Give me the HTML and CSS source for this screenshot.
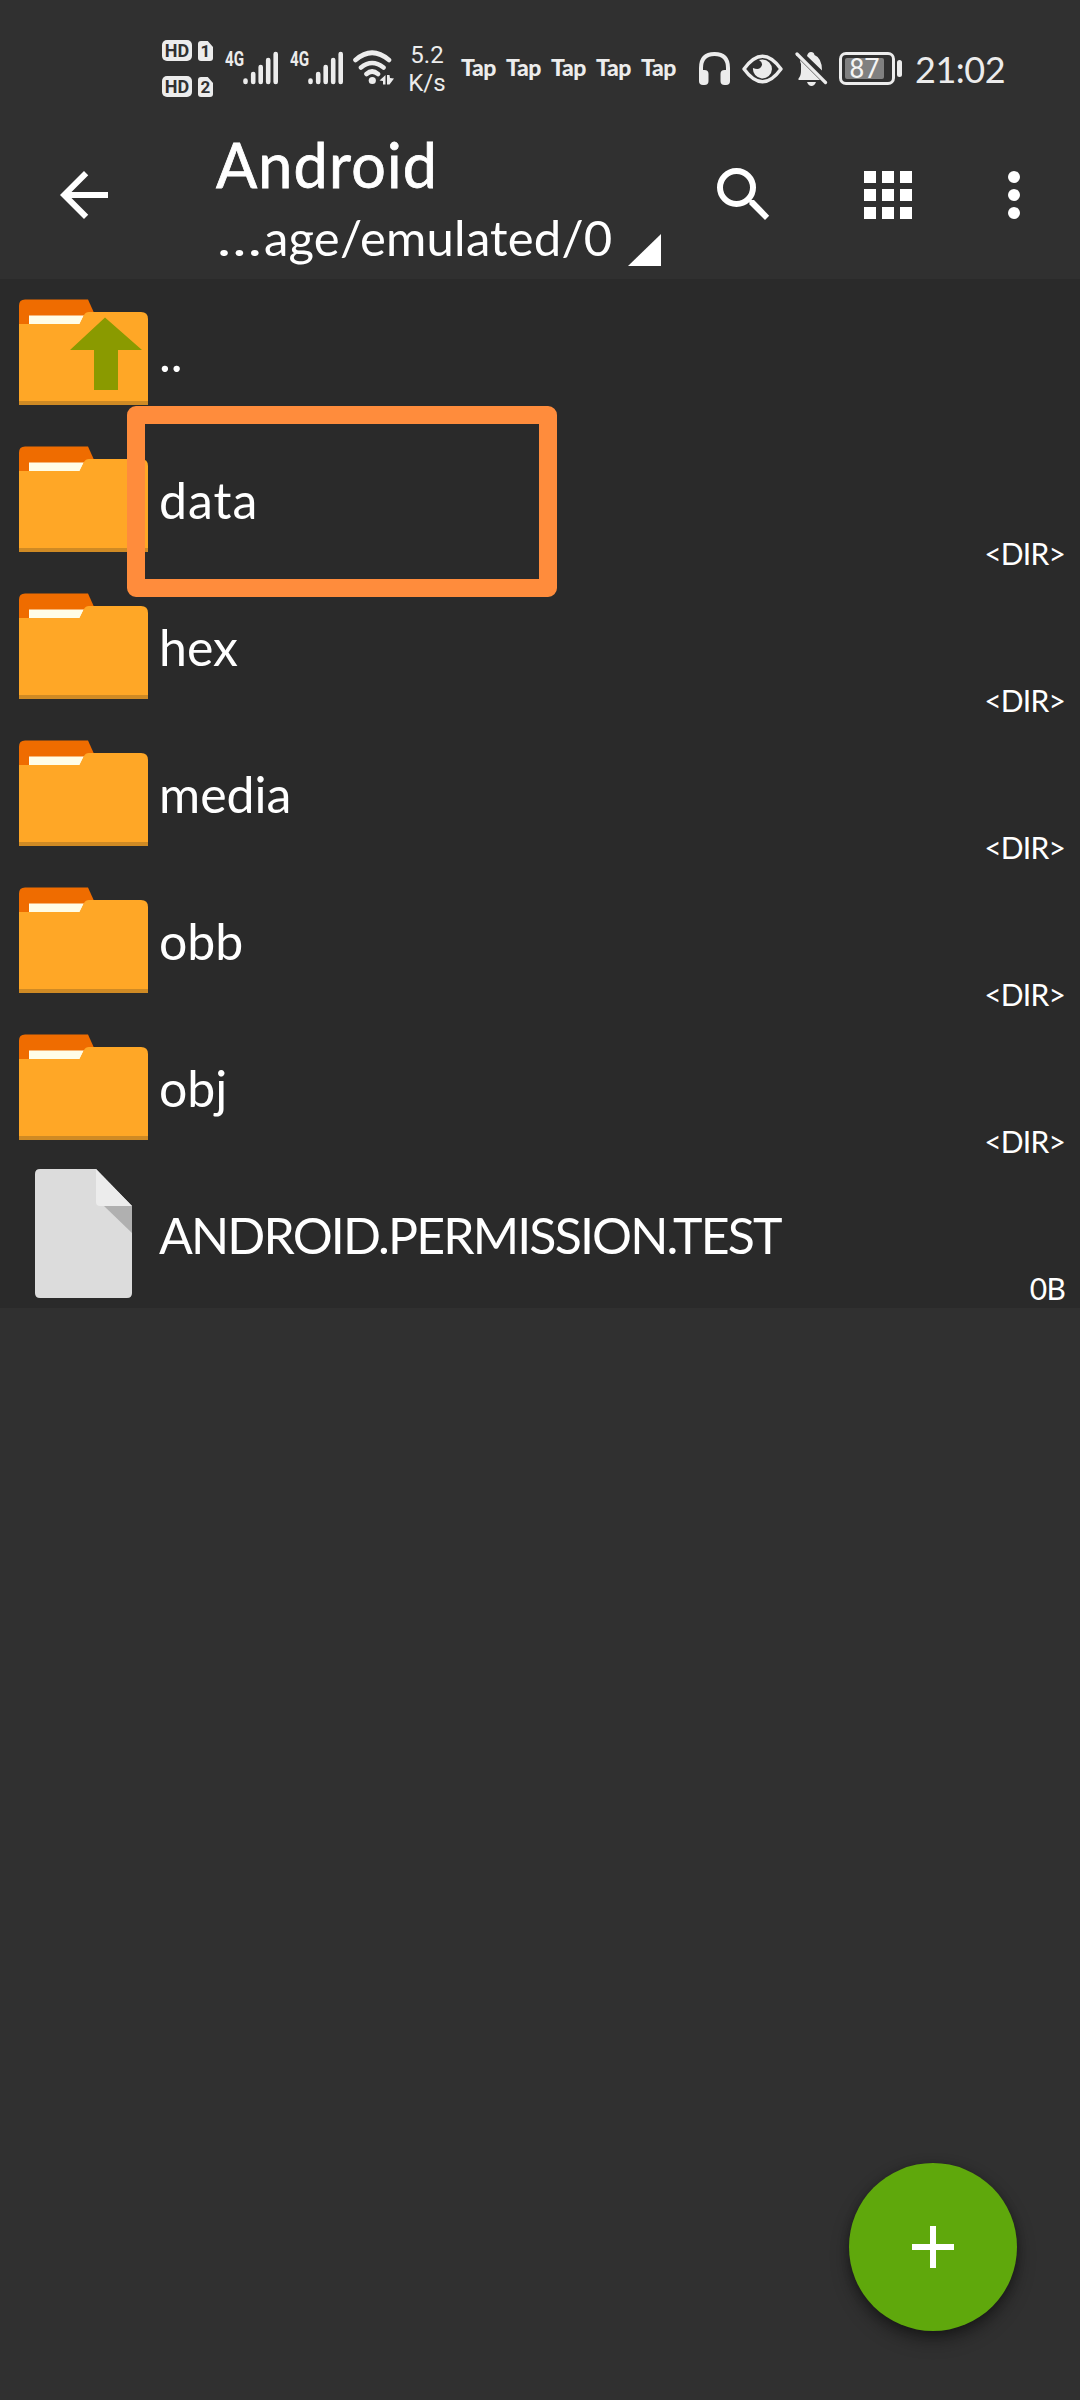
FILE: index.html
```html
<!DOCTYPE html>
<html lang="en">
<head>
<meta charset="utf-8">
<title>Android</title>
<link rel="stylesheet" href="styles.css">
</head>
<body>
<svg class="defs" width="0" height="0">
  <symbol id="folder" viewBox="0 0 129 129">
    <path fill="#ef6c00" d="M0 40V18.500Q0 12.500 6 12.500H69L76 28V40z"/>
    <path fill="#fffde7" d="M10 28.500H65L61 37H10z"/>
    <path fill="#ffa726" d="M0 37H60.500L65 28Q66.500 25 70 25H122Q129 25 129 32V118H0z"/>
    <path fill="#cf8a24" d="M0 114H129V118H0z"/>
  </symbol>
  <symbol id="signal" viewBox="0 0 36 34">
    <path fill="none" stroke="#ececec" stroke-width="4.600" stroke-linecap="round" d="M2.500 29.500V31M10.200 23V31M17.700 16V31M25.200 9V31M32.700 3V31"/>
  </symbol>
</svg>
<header class="status">
  <div class="sims">
    <div class="sim"><span class="hd">HD</span><span class="slot">1</span></div>
    <div class="sim"><span class="hd">HD</span><span class="slot">2</span></div>
  </div>
  <div class="net"><span>4G</span><svg width="36" height="34"><use href="#signal"/></svg></div>
  <div class="net second"><span>4G</span><svg width="36" height="34"><use href="#signal"/></svg></div>
  <svg class="wifi" width="42" height="36" viewBox="0 0 42 36">
    <g fill="none" stroke="#ececec" stroke-width="4.600" stroke-linecap="round">
      <path d="M2.500 10Q19 -4.500 36 10M8 17.500Q19 8.500 30.500 17.500M13.500 24Q19 19 25 24"/>
    </g>
    <circle cx="19.300" cy="30.500" r="3.600" fill="#ececec"/>
    <path fill="#ececec" d="M32.500 25V34.500H30V31L26.500 30.500zM34 25H36.500L37 28L41 28.500L36.500 34.500H34z"/>
  </svg>
  <div class="speed"><span>5.2</span><span>K/s</span></div>
  <div class="taps"><span>Tap</span><span>Tap</span><span>Tap</span><span>Tap</span><span>Tap</span></div>
  <svg class="phones" width="32" height="34" viewBox="0 0 32 34">
    <path fill="none" stroke="#ececec" stroke-width="4" d="M2 24V16Q2 2 15.500 2T29 16V24"/>
    <rect x="0" y="18" width="9.500" height="15" rx="4" fill="#ececec"/><rect x="21.500" y="18" width="9.500" height="15" rx="4" fill="#ececec"/>
  </svg>
  <svg class="eye" width="42" height="30" viewBox="0 0 42 30">
    <path fill="none" stroke="#ececec" stroke-width="3.400" stroke-linejoin="round" d="M2 15Q20.500 -10.500 39 15Q20.500 40.500 2 15z"/>
    <path fill="#ececec" d="M20.500 5.500A9.500 9.500 0 1 1 11 14Q18 17 20 11Q20.500 8 17 6Q18.500 5.500 20.500 5.500z"/>
  </svg>
  <svg class="bell" width="33" height="36" viewBox="0 0 33 36">
    <path fill="#ececec" d="M5 9L25 29H3.500V27.500Q6 25 6 20V13Q5 11 5 9zM12 5Q13 1 16 1T19.500 4Q27 7 27 19.500zM12 31H21Q19.500 35 16.500 35T12 31z"/>
    <path stroke="#ececec" stroke-width="3.200" stroke-linecap="round" d="M2 3L30.500 31.500"/>
  </svg>
  <div class="battery"><span>87</span></div><i class="nub"></i>
  <div class="clock">21:02</div>
</header>
<nav class="toolbar">
  <svg class="back" width="72" height="72" viewBox="0 0 24 24" fill="#fff"><path d="M20 11H7.830l5.590-5.590L12 4l-8 8 8 8 1.410-1.410L7.830 13H20z"/></svg>
  <div class="titles">
    <div class="title">Android</div>
    <div class="path"><span class="text"><span class="dots">…</span>age/emulated/0</span><svg width="33" height="32" viewBox="0 0 33 32"><path fill="#fff" d="M0 32L33 0V32z"/></svg></div>
  </div>
  <svg class="search" width="72" height="72" viewBox="0 0 72 72"><circle cx="28.500" cy="28.500" r="16.500" fill="none" stroke="#fff" stroke-width="6"/><path fill="#fff" d="M41 41H46L61.200 56.700L57 61L41.500 45.500z"/></svg>
  <svg class="grid" width="48" height="48" viewBox="0 0 48 48" fill="#fff"><path d="M0 0h12v12H0zM18 0h12v12H18zM36 0h12v12H36zM0 18h12v12H0zM18 18h12v12H18zM36 18h12v12H36zM0 36h12v12H0zM18 36h12v12H18zM36 36h12v12H36z"/></svg>
  <svg class="more" width="12" height="48" viewBox="0 0 12 48" fill="#fff"><circle cx="6" cy="6" r="6"/><circle cx="6" cy="24" r="6"/><circle cx="6" cy="42" r="6"/></svg>
</nav>
<main class="list">
  <div class="row"><svg width="129" height="129" viewBox="0 0 129 129"><use href="#folder"/><path fill="#8a9a00" d="M86 30.500L123 63H99V103H75V63H51z"/></svg><span class="name">..</span></div>
  <div class="row selected"><svg width="129" height="129"><use href="#folder"/></svg><span class="name wide">data</span><span class="size">&lt;DIR&gt;</span></div>
  <div class="row"><svg width="129" height="129"><use href="#folder"/></svg><span class="name">hex</span><span class="size">&lt;DIR&gt;</span></div>
  <div class="row"><svg width="129" height="129"><use href="#folder"/></svg><span class="name">media</span><span class="size">&lt;DIR&gt;</span></div>
  <div class="row"><svg width="129" height="129"><use href="#folder"/></svg><span class="name">obb</span><span class="size">&lt;DIR&gt;</span></div>
  <div class="row"><svg width="129" height="129"><use href="#folder"/></svg><span class="name">obj</span><span class="size">&lt;DIR&gt;</span></div>
  <div class="row"><svg width="129" height="129" viewBox="0 0 129 129"><path fill="#dcdcdc" d="M21 0H77L113 37V124Q113 129 108 129H21Q16 129 16 124V5Q16 0 21 0z"/><path fill="#ececec" d="M77 0L113 37H81Q77 37 77 33z"/><path fill="#b0b0b0" d="M85 37H113V64z"/></svg><span class="name caps">ANDROID.PERMISSION.TEST</span><span class="size">0B</span></div>
</main>
<button class="fab" aria-label="Add"><svg width="42" height="42" viewBox="0 0 42 42"><path fill="#fff" d="M18 0h6v18h18v6H24v18h-6V24H0v-6h18z"/></svg></button>
</body>
</html>
```
FILE: styles.css
```css
*, *::after { box-sizing: border-box; }
body { margin: 0; width: 1080px; height: 2400px; background: #303030; color: #fff; font-family: Lato, sans-serif; overflow: hidden; }
svg { display: block; flex: none; }
.defs { position: absolute; }
.status { height: 111px; display: flex; align-items: flex-start; padding-left: 162px; color: #ececec; white-space: nowrap; }
.status > * { flex: none; }
.sims { width: 63px; padding-top: 40px; display: flex; flex-direction: column; gap: 15px; }
.sim { display: flex; gap: 6px; height: 21px; }
.hd, .slot { background: #ececec; color: #303030; font: bold 18px/22px Roboto, sans-serif; text-align: center; border-radius: 5px; height: 21px; }
.hd { width: 30px; }
.slot { width: 15px; margin-top: 1px; height: 20px; line-height: 21px; font-size: 17px; border-radius: 3px; clip-path: polygon(0 0, 65% 0, 100% 30%, 100% 100%, 0 100%); }
.net { width: 65px; display: flex; padding-top: 51px; }
.net span { width: 18px; font: bold 20px/16px Roboto, sans-serif; transform: scaleX(.76); transform-origin: 0 0; }
.second { width: 63px; }
.wifi { margin-top: 50px; }
.speed { width: 50px; margin-left: 7px; padding-top: 41px; display: flex; flex-direction: column; text-align: center; font: 24px/28px Roboto, sans-serif; }
.taps { width: 240px; margin-left: 9px; padding-top: 56px; display: flex; font: 900 23px/22px Lato, sans-serif; }
.taps span { width: 45px; letter-spacing: -.4px; }
.phones { margin: 52px 0 0 -2px; }
.eye { margin: 54px 0 0 11px; }
.bell { margin: 51px 0 0 11px; }
.battery { width: 56px; height: 33px; margin: 52px 0 0 11px; padding: 3px; border: 3px solid #ececec; border-radius: 7px; }
.battery span { display: block; width: 39px; height: 21px; background: #808080; border-radius: 2px; text-align: center; font: 27px/22px Roboto, sans-serif; color: #f4f4f4; }
.nub { width: 5px; height: 17px; margin: 60px 0 0 2px; border-radius: 3px; background: #ececec; }
.clock { margin: 47px 0 0 13px; font-size: 36px; line-height: 44px; letter-spacing: -.5px; }
.toolbar { height: 168px; display: flex; align-items: flex-start; padding-left: 48px; }
.back { margin-top: 48px; }
.titles { width: 588px; padding: 19px 0 0 96px; white-space: nowrap; }
.title { font-size: 61px; line-height: 70px; letter-spacing: 1.2px; -webkit-text-stroke: .8px #fff; }
.path { display: flex; font-size: 49px; line-height: 58px; }
.path .text { width: 412px; padding: 8px 0 0 1px; letter-spacing: .2px; }
.dots { display: inline-block; width: 47px; transform: scaleX(1.22); transform-origin: 0 0; }
.path svg { margin-top: 34px; }
.search { margin-top: 48px; }
.grid { margin: 60px 0 0 84px; }
.more { margin: 60px 0 0 96px; }
.list { background: #2a2a2a; }
.row { height: 147px; display: flex; padding: 8px 15px 0 19px; position: relative; }
.name { flex: 1; margin-left: 11px; padding-top: 36px; font-size: 50px; line-height: 60px; white-space: nowrap; }
.wide { letter-spacing: 1px; }
.caps { letter-spacing: -1.85px; }
.size { align-self: flex-end; padding-bottom: 2px; font-size: 30px; line-height: 36px; letter-spacing: -.8px; }
.selected::after { content: ""; position: absolute; left: 127px; top: -20px; width: 430px; height: 191px; border: 18px solid #ff8c3c; border-radius: 9px; z-index: 1; }
.fab { position: absolute; left: 849px; top: 2163px; width: 168px; height: 168px; padding: 0; border: 0; border-radius: 50%; background: #5fa80c; display: flex; align-items: center; justify-content: center; box-shadow: 0 9px 18px rgba(0, 0, 0, .38), 0 2px 8px rgba(0, 0, 0, .25); }
```
